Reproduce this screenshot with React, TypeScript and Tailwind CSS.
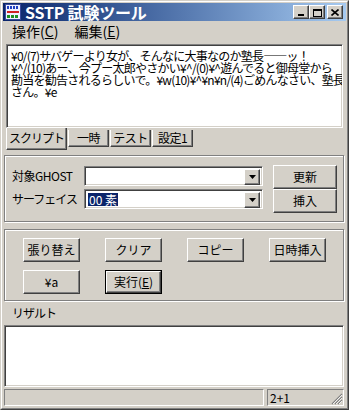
import React from 'react';

const jp = { fontFamily: '"Noto Sans CJK JP", "Noto Sans", sans-serif' };

const raised =
  'bg-[#d4d0c8] border border-t-white border-l-white border-r-[#404040] border-b-[#404040] shadow-[inset_-1px_-1px_0_#808080]';
const sunken =
  'bg-white border border-t-[#808080] border-l-[#808080] border-r-white border-b-white shadow-[inset_1px_1px_0_#404040,inset_-1px_-1px_0_#d4d0c8]';
const etched = 'border border-[#808080] shadow-[inset_1px_1px_0_#fff,1px_1px_0_#fff]';

function CapButton({ children }: { children: React.ReactNode }) {
  return <div className={`w-[16px] h-[14px] flex items-center justify-center ${raised}`}>{children}</div>;
}

function AppIcon() {
  return (
    <svg width="16" height="16" viewBox="0 0 16 16">
      <rect x="0.5" y="0.5" width="15" height="15" fill="#eef0ff" stroke="#3a4a9a" />
      <rect x="2" y="2" width="2" height="3" fill="#2040c0" />
      <rect x="5" y="2" width="2" height="3" fill="#2040c0" />
      <rect x="8" y="2" width="2" height="3" fill="#2040c0" />
      <rect x="11" y="2" width="2" height="3" fill="#2040c0" />
      <rect x="2" y="7" width="12" height="2" fill="#d02020" />
      <rect x="2" y="11" width="3" height="3" fill="#209020" />
      <rect x="6" y="11" width="3" height="3" fill="#209020" />
      <rect x="10" y="11" width="3" height="3" fill="#209020" />
    </svg>
  );
}

function Combo({ value }: { value?: string }) {
  return (
    <div className={`w-[179px] h-[20px] flex p-[2px] ${sunken}`}>
      <div className="flex-1 flex items-center pl-[1px]">
        {value && (
          <span className="bg-[#0a246a] text-white text-[12px] leading-[13px] px-[1px]" style={jp}>
            {value}
          </span>
        )}
      </div>
      <div className={`w-[16px] h-[16px] flex items-center justify-center ${raised}`}>
        <svg width="7" height="4" viewBox="0 0 7 4">
          <polygon points="0,0 7,0 3.5,4" fill="#000" />
        </svg>
      </div>
    </div>
  );
}

function Btn({ label, w = 'w-[57px]', def = false }: { label: React.ReactNode; w?: string; def?: boolean }) {
  const inner = (
    <div className={`h-full w-full flex items-center justify-center text-[12px] text-black ${raised}`} style={jp}>
      {label}
    </div>
  );
  if (def) return <div className={`${w} h-[24px] border border-black`}>{inner}</div>;
  return <div className={`${w} h-[24px]`}>{inner}</div>;
}

export default function App() {
  const lines = [
    '¥0/(7)サバゲーより女が、そんなに大事なのか塾長――ッ！',
    '¥^/(10)あー、今プー太郎やさかい¥^/(0)¥^遊んでると御母堂から',
    '勘当を勧告されるらしいで。¥w(10)¥^¥n¥n/(4)ごめんなさい、塾長',
    'さん。¥e',
  ];
  const tabs = ['一時', 'テスト', '設定1'];

  return (
    <div className="w-[349px] h-[410px] bg-[#d4d0c8] border border-t-[#d4d0c8] border-l-[#d4d0c8] border-r-[#404040] border-b-[#404040]">
      <div className="h-full w-full border border-t-white border-l-white border-r-[#808080] border-b-[#808080] p-[1px] flex flex-col">
        {/* title bar */}
        <div className="h-[18px] flex items-center bg-linear-to-r from-[#0a246a] to-[#a6caf0] pl-[2px] pr-[3px]">
          <AppIcon />
          <span className="ml-[4px] text-white font-bold text-[16px] leading-[18px] tracking-[-0.2px]" style={jp}>
            SSTP 試験ツール
          </span>
          <div className="ml-auto flex items-center">
            <CapButton>
              <svg width="8" height="9" viewBox="0 0 8 9">
                <rect x="1" y="6" width="6" height="2" fill="#000" />
              </svg>
            </CapButton>
            <CapButton>
              <svg width="9" height="9" viewBox="0 0 9 9">
                <rect x="0.5" y="1.5" width="8" height="7" fill="none" stroke="#000" />
                <rect x="0" y="1" width="9" height="2" fill="#000" />
              </svg>
            </CapButton>
            <div className="ml-[2px]">
              <CapButton>
                <svg width="8" height="7" viewBox="0 0 8 7">
                  <path d="M0.5 0.5L7.5 6.5M7.5 0.5L0.5 6.5" stroke="#000" strokeWidth="1.6" />
                </svg>
              </CapButton>
            </div>
          </div>
        </div>

        {/* menu */}
        <div className="h-[20px] flex items-center text-[14px] text-black" style={jp}>
          <span className="ml-[9px]">
            操作(<span className="underline">C</span>)
          </span>
          <span className="ml-[16px]">
            編集(<span className="underline">E</span>)
          </span>
        </div>

        {/* script area */}
        <div className={`mt-[3px] ml-[3px] w-[337px] h-[84px] pt-[5px] pl-[4px] overflow-hidden ${sunken}`}>
          {lines.map((l, i) => (
            <div
              key={i}
              className="whitespace-nowrap text-[12px] leading-[12px] tracking-[-0.75px] text-black"
              style={jp}
            >
              {l}
            </div>
          ))}
        </div>

        {/* tabs */}
        <div className="flex items-start ml-[3px] h-[22px] text-[12px] text-black" style={jp}>
          <div className="w-[61px] h-[22px] flex items-center justify-center pb-[2px] border-l border-l-white border-r border-r-[#404040] border-b border-b-[#404040] shadow-[inset_-1px_-1px_0_#808080] tracking-[-1px]">
            スクリプト
          </div>
          {tabs.map(t => (
            <div
              key={t}
              className="mt-[2px] ml-[1px] w-[41px] h-[17px] flex items-center justify-center border-l border-l-white border-r border-r-[#404040] border-b border-b-[#404040] shadow-[inset_-1px_-1px_0_#808080] tracking-[-0.5px]"
            >
              {t}
            </div>
          ))}
        </div>

        {/* ghost / surface panel */}
        <div className={`mt-[5px] ml-[1px] w-[340px] h-[67px] flex pt-[9px] pl-[7px] ${etched}`}>
          <div className="flex flex-col gap-[3px] pt-[1px]">
            <div className="flex items-center">
              <span className="w-[72px] text-[12px] text-black tracking-[-0.5px]" style={jp}>
                対象GHOST
              </span>
              <Combo />
            </div>
            <div className="flex items-center">
              <span className="w-[72px] text-[12px] text-black tracking-[-1px]" style={jp}>
                サーフェイス
              </span>
              <Combo value="00 素" />
            </div>
          </div>
          <div className="ml-[10px] flex flex-col">
            <Btn label="更新" w="w-[64px]" />
            <Btn label="挿入" w="w-[64px]" />
          </div>
        </div>

        {/* actions panel */}
        <div className={`mt-[7px] ml-[1px] w-[340px] h-[72px] pt-[8px] pl-[18px] ${etched}`}>
          <div className="grid grid-cols-[57px_57px_57px_57px] gap-x-[25px] gap-y-[8px]">
            <Btn label="張り替え" />
            <Btn label="クリア" />
            <Btn label="コピー" />
            <Btn label="日時挿入" />
            <Btn label="¥a" />
            <Btn
              def
              label={
                <span>
                  実行(<span className="underline">E</span>)
                </span>
              }
            />
          </div>
        </div>

        {/* result */}
        <div className="h-[24px] pl-[9px] pt-[3px] text-[12px] text-black tracking-[-1px]" style={jp}>
          リザルト
        </div>
        <div className={`ml-[1px] w-[340px] h-[62px] ${sunken}`} />

        {/* status bar */}
        <div className="mt-[2px] ml-[1px] w-[340px] h-[17px] flex gap-[3px]">
          <div className="w-[260px] h-full border border-t-[#808080] border-l-[#808080] border-r-white border-b-white" />
          <div className="relative flex-1 h-full border border-t-[#808080] border-l-[#808080] border-r-white border-b-white pl-[2px] flex items-center text-[12px] text-black" style={jp}>
            2+1
            <svg className="absolute right-0 bottom-0" width="12" height="12" viewBox="0 0 12 12">
              <path d="M11 1L1 11M11 4L4 11M11 7L7 11" stroke="#808080" strokeWidth="1.2" />
              <path d="M11 2L2 11M11 5L5 11M11 8L8 11" stroke="#fff" strokeWidth="0.8" />
            </svg>
          </div>
        </div>
      </div>
    </div>
  );
}
